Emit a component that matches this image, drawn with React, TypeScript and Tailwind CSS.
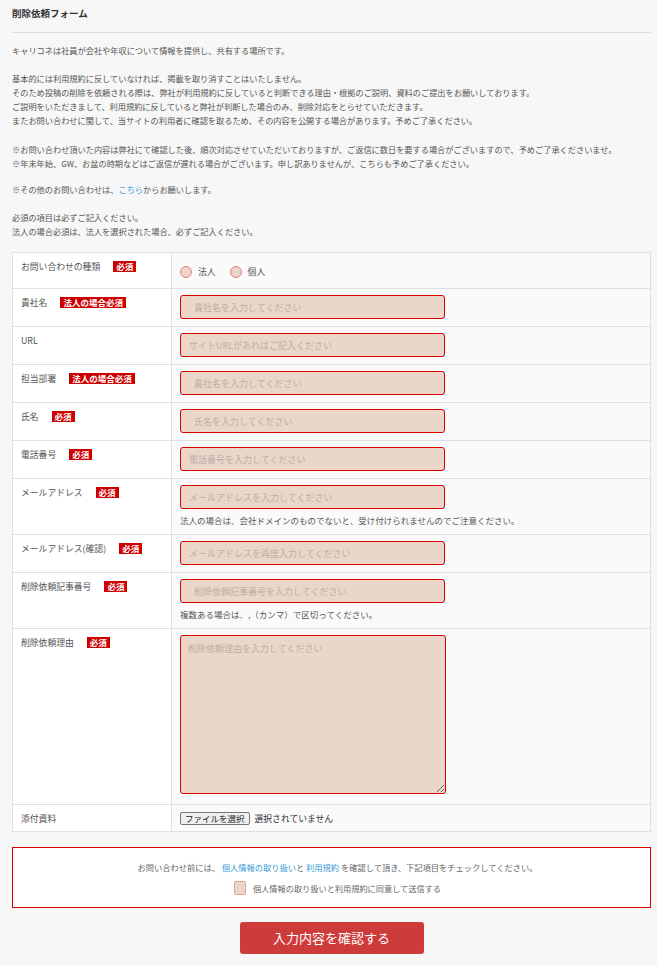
import type { ReactNode } from "react"

type Field = {
    label: string
    badge?: string
    placeholder?: string
    indent?: boolean
    note?: string
}

const fields: Field[] = [
    { label: "貴社名", badge: "法人の場合必須", placeholder: "貴社名を入力してください", indent: true },
    { label: "URL", placeholder: "サイトURLがあればご記入ください" },
    { label: "担当部署", badge: "法人の場合必須", placeholder: "貴社名を入力してください", indent: true },
    { label: "氏名", badge: "必須", placeholder: "氏名を入力してください", indent: true },
    { label: "電話番号", badge: "必須", placeholder: "電話番号を入力してください" },
    { label: "メールアドレス", badge: "必須", placeholder: "メールアドレスを入力してください", note: "法人の場合は、会社ドメインのものでないと、受け付けられませんのでご注意ください。" },
    { label: "メールアドレス(確認)", badge: "必須", placeholder: "メールアドレスを再度入力してください" },
    { label: "削除依頼記事番号", badge: "必須", placeholder: "削除依頼記事番号を入力してください", indent: true, note: "複数ある場合は、,（カンマ）で区切ってください。" },
]

function Badge({ children }: { children: ReactNode }) {
    return (
        <span className="bg-[#cc0000] text-white font-bold text-[8.5px] leading-[11px] h-[11px] px-[3px] whitespace-nowrap">
            {children}
        </span>
    )
}

function LabelCell({ label, badge }: { label: string; badge?: string }) {
    return (
        <div className="bg-white border-r border-[#e0e0e0] px-2 pt-2 flex items-start gap-[13px]">
            <span className="text-[8.8px] leading-[11px] text-[#555]">{label}</span>
            {badge && <Badge>{badge}</Badge>}
        </div>
    )
}

function Radio({ label }: { label: string }) {
    return (
        <span className="flex items-center gap-[6px]">
            <span className="w-[12px] h-[12px] rounded-full border border-[#e58080] bg-[#ebd6ca]"></span>
            <span className="text-[8.8px] text-[#555]">{label}</span>
        </span>
    )
}

export default function App() {
    return (
        <div className="min-h-screen bg-[#f7f7f7] text-[#555] font-['Noto_Sans_CJK_JP',sans-serif] pb-[11px]">
            <div className="ml-3 mr-[6px]">
                <h1 className="text-[9.5px] leading-[14px] font-bold text-[#333] pt-[6px] pb-[12px] border-b border-[#dddddd]">
                    削除依頼フォーム
                </h1>

                <div className="text-[8.2px] leading-[14px] pt-[10px]">
                    <p className="mb-[14px]">キャリコネは社員が会社や年収について情報を提供し、共有する場所です。</p>
                    <p className="mb-[15px]">
                        基本的には利用規約に反していなければ、掲載を取り消すことはいたしません。<br />
                        そのため投稿の削除を依頼される際は、弊社が利用規約に反していると判断できる理由・根拠のご説明、資料のご提出をお願いしております。<br />
                        ご説明をいただきまして、利用規約に反していると弊社が判断した場合のみ、削除対応をとらせていただきます。<br />
                        またお問い合わせに関して、当サイトの利用者に確認を取るため、その内容を公開する場合があります。予めご了承ください。
                    </p>
                    <p className="mb-[12px]">
                        ※お問い合わせ頂いた内容は弊社にて確認した後、順次対応させていただいておりますが、ご返信に数日を要する場合がございますので、予めご了承くださいませ。<br />
                        ※年末年始、GW、お盆の時期などはご返信が遅れる場合がございます。申し訳ありませんが、こちらも予めご了承ください。
                    </p>
                    <p className="mb-[14px]">
                        ※その他のお問い合わせは、<span className="text-[#3a9ad9]">こちら</span>からお願いします。
                    </p>
                    <p className="mb-[14px]">
                        必須の項目は必ずご記入ください。<br />
                        法人の場合必須は、法人を選択された場合、必ずご記入ください。
                    </p>
                </div>

                <div className="border-t border-l border-r border-[#e0e0e0]">
                    <div className="grid grid-cols-[159px_1fr] border-b border-[#e0e0e0] h-[36px]">
                        <LabelCell label="お問い合わせの種類" badge="必須" />
                        <div className="bg-[#fafafa] pl-2 flex items-center gap-[14px] pt-[2px]">
                            <Radio label="法人" />
                            <Radio label="個人" />
                        </div>
                    </div>

                    {fields.map((f, i) => (
                        <div key={i} className="grid grid-cols-[159px_1fr] border-b border-[#e0e0e0]">
                            <LabelCell label={f.label} badge={f.badge} />
                            <div className="bg-[#fafafa] pl-2 pt-[6px] pb-[7px]">
                                <input
                                    readOnly
                                    placeholder={f.placeholder}
                                    className={`block w-[265px] h-[24px] rounded-[3px] border border-[#d80000] bg-[#ebd6ca] text-[9px] outline-none placeholder:text-[#bfaea6] ${f.indent ? "pl-[13px]" : "pl-[8px]"}`}
                                />
                                {f.note && (
                                    <p className="mt-[4px] text-[8.5px] leading-[14px] text-[#555]">{f.note}</p>
                                )}
                            </div>
                        </div>
                    ))}

                    <div className="grid grid-cols-[159px_1fr] border-b border-[#e0e0e0]">
                        <LabelCell label="削除依頼理由" badge="必須" />
                        <div className="bg-[#fafafa] pl-2 pt-[6px] pb-[10px]">
                            <textarea
                                readOnly
                                placeholder="削除依頼理由を入力してください"
                                className="block w-[266px] h-[159px] rounded-[3px] border border-[#d80000] bg-[#ebd6ca] text-[9px] leading-[14px] px-[7px] py-[6px] outline-none placeholder:text-[#bfaea6]"
                            />
                        </div>
                    </div>

                    <div className="grid grid-cols-[159px_1fr] border-b border-[#e0e0e0] h-[27px]">
                        <LabelCell label="添付資料" />
                        <div className="bg-[#fafafa] pl-2 flex items-center gap-[5px] pt-[1px]">
                            <span className="border border-[#767676] rounded-[2px] bg-[#efefef] text-[8.5px] leading-[11px] px-[4px] text-[#222]">
                                ファイルを選択
                            </span>
                            <span className="text-[8.8px] text-[#333]">選択されていません</span>
                        </div>
                    </div>
                </div>

                <div className="mt-[15px] border border-[#d80000] bg-white pt-[12px] pb-[12px] flex flex-col items-center">
                    <p className="ml-[12px] text-[8.25px] leading-[14px] text-[#666]">
                        お問い合わせ前には、 <span className="text-[#3a9ad9]">個人情報の取り扱い</span>と <span className="text-[#3a9ad9]">利用規約</span> を確認して頂き、下記項目をチェックしてください。
                    </p>
                    <div className="mt-[7px] ml-[12px] flex items-center gap-[7px] h-[14px]">
                        <span className="w-[12px] h-[14px] rounded-[2px] border border-dotted border-[#e07070] bg-[#ebd6ca]"></span>
                        <span className="text-[8.2px] text-[#666]">個人情報の取り扱いと利用規約に同意して送信する</span>
                    </div>
                </div>

                <div className="mt-[14px] flex justify-center">
                    <button className="w-[184px] h-[32px] rounded-[3px] bg-[#cd3b3b] text-white text-[13px]">
                        入力内容を確認する
                    </button>
                </div>
            </div>
        </div>
    )
}
